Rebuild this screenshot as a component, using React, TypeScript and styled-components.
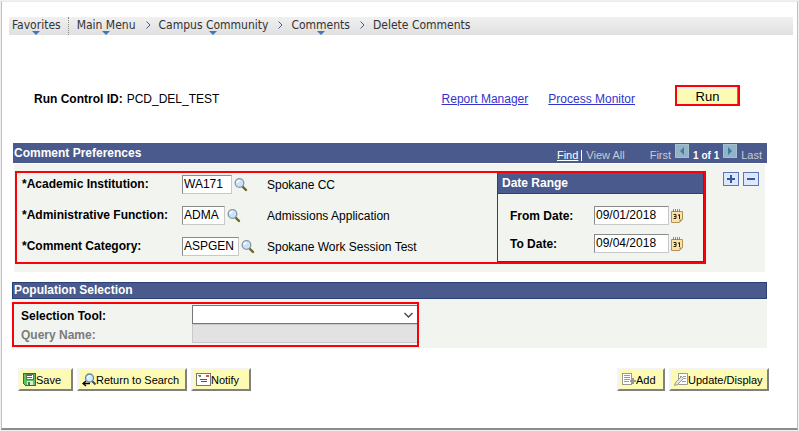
import React from "react";
import styled, { createGlobalStyle } from "styled-components";

const NAVY = "#4a5a8c";
const NAVY_EDGE = "#2b4075";
const PANEL = "#f2f4ef";
const RED = "#fb0007";
const CREAM = "#fdfbb3";

const GlobalStyle = createGlobalStyle`
  * { box-sizing: border-box; }
  body {
    margin: 0;
    background: #f0f0f0;
    color: #000;
    font: 12px/16px "Liberation Sans", Arial, sans-serif;
  }
  button, input, select { font: inherit; color: inherit; border-radius: 0; margin: 0; }
  svg { display: block; flex: none; }
`;

const Page = styled.div`
  margin: 1px;
  min-height: calc(100vh - 2px);
  padding: 15px 4px 36px 7px;
  background: #fff;
  border: 1px solid #c0c0c0;
  border-top-color: #ebebeb;
  border-bottom: 2px solid #8c8c8c;
`;

const Crumbs = styled.nav`
  display: flex;
  align-items: center;
  height: 18px;
  padding-left: 3px;
  background: linear-gradient(#f0f0f0, #e0e0e0);
  font: 12px/18px "DejaVu Sans Condensed", Tahoma, sans-serif;
  color: #333;
`;

const CrumbLink = styled.a`
  position: relative;
  height: 18px;
  line-height: 16px;
  color: inherit;
  text-decoration: none;
  white-space: nowrap;
`;

const CrumbArrow = styled.svg`
  position: absolute;
  bottom: 0;
  left: calc(50% - 4px);
`;

const CrumbDivider = styled.span`
  height: 18px;
  margin: 0 8px 0 7px;
  border-left: 1px dotted #888;
`;

const CrumbChevron = styled.svg`
  margin: 0 8px 2px 10px;
`;

const Content = styled.main`
  padding: 0 26px 0 4px;
`;

const RunRow = styled.div`
  display: flex;
  align-items: center;
  margin: 49px 27px 36px 21px;
`;

const RunId = styled.span`
  flex: 1;
  padding-top: 7px;
`;

const RunLabel = styled.strong`
  margin-right: 4px;
`;

const RunLink = styled.a`
  margin-right: 20px;
  padding-top: 7px;
  color: #3333cc;
`;

const RunButton = styled.button`
  width: 65px;
  height: 21px;
  margin-left: 20px;
  padding: 2px 0 0;
  border: 2px solid ${RED};
  background: ${CREAM};
  box-shadow: inset -1px 0 #808080, inset 0 2px #f4f4ee;
  font-size: 13px;
  line-height: 15px;
`;

const SectionBar = styled.header<{ $outlined?: boolean }>`
  display: flex;
  align-items: center;
  justify-content: space-between;
  min-height: ${(p) => (p.$outlined ? 17 : 20)}px;
  padding: 0 5px 0 1px;
  border: ${(p) => (p.$outlined ? `1px solid ${NAVY_EDGE}` : "0")};
  background: ${NAVY};
  color: #fff;
`;

const SectionTitle = styled.h2`
  margin: 0;
  font-size: 12px;
  line-height: 15px;
`;

const Pager = styled.div`
  display: flex;
  align-items: center;
  font-size: 11px;
  color: #c8ccd6;
`;

const PagerText = styled.span`
  padding-top: 5px;
  line-height: 15px;
`;

const PagerLink = styled.a`
  padding-top: 5px;
  line-height: 15px;
  color: #fff;
`;

const PagerBar = styled.span`
  width: 1px;
  height: 11px;
  margin: 4px 4px 0 3px;
  background: #fff;
`;

const PagerGap = styled.span`
  width: 25px;
`;

const PagerButton = styled.button`
  width: 14px;
  height: 14px;
  margin: 0 4px 4px;
  padding: 2px 4px;
  border: 1px solid #a3c0d0;
  background: #93b3c6;
`;

const PagerCount = styled.strong`
  padding-top: 5px;
  font-size: 10px;
  line-height: 15px;
  color: #fff;
`;

const PreferencesPanel = styled.div`
  display: flex;
  align-items: flex-start;
  margin: 1px 2px 0 1px;
  padding: 7px 6px 8px 1px;
  background: ${PANEL};
`;

const PreferencesBox = styled.div`
  flex: 1;
  display: flex;
  margin-right: 17px;
  border: 2px solid ${RED};
`;

const FieldGrid = styled.div`
  flex: 1;
  display: grid;
  grid-template-columns: 160px 85px 1fr;
  grid-auto-rows: 19px;
  row-gap: 12px;
  padding: 2px 0 5px 5px;
`;

const Label = styled.label<{ $muted?: boolean }>`
  padding-top: 1px;
  font-weight: bold;
  white-space: nowrap;
  color: ${(p) => (p.$muted ? "#7b7b7b" : "#000")};
`;

const FieldSlot = styled.span`
  display: flex;
  align-items: center;
  gap: 2px;
`;

const TextInput = styled.input<{ $width: number }>`
  width: ${(p) => p.$width}px;
  height: 19px;
  padding: 0 1px 2px;
  border: 1px solid #c8c8c8;
  border-top-color: #8b8b8b;
  border-left-color: #8b8b8b;
  background: #fff;
`;

const IconButton = styled.button`
  padding: 0;
  border: 0;
  background: none;
`;

const Description = styled.span`
  padding-top: 2px;
`;

const DateBox = styled.fieldset`
  width: 207px;
  min-width: 0;
  margin: 0;
  padding: 0;
  border: 1px solid ${NAVY_EDGE};
  border-top: 0;
`;

const DateHeader = styled.h3`
  height: 21px;
  margin: 0;
  padding: 0 4px;
  background: ${NAVY};
  border-bottom: 1px solid ${NAVY_EDGE};
  color: #fff;
  font-size: 12px;
  line-height: 20px;
`;

const DateGrid = styled.div`
  display: grid;
  grid-template-columns: 84px 1fr;
  grid-auto-rows: 19px;
  row-gap: 9px;
  padding: 12px 0 8px 12px;
`;

const DateLabel = styled(Label)`
  padding-top: 2px;
`;

const RowButtons = styled.div`
  display: flex;
  gap: 4px;
  padding-top: 1px;
`;

const RowButton = styled.button`
  width: 16px;
  height: 14px;
  padding: 1px 3px;
  border: 1px solid #5b74ba;
  background: #dce8fb;
`;

const Population = styled.section`
  margin: 10px 0 0 -1px;
`;

const PopulationPanel = styled.div`
  padding: 3px 0 1px;
  background: ${PANEL};
`;

const PopulationBox = styled.div`
  display: grid;
  grid-template-columns: 172px 1fr;
  grid-auto-rows: 19px;
  width: 407px;
  max-width: 100%;
  padding: 1px 0 2px 6px;
  border: 2px solid ${RED};
`;

const PopulationLabel = styled(Label)`
  padding: 3px 0 0 1px;
`;

const SelectWrap = styled.span`
  position: relative;
  display: block;
`;

const SelectBox = styled.select`
  display: block;
  width: 100%;
  height: 19px;
  padding: 0 18px 0 3px;
  border: 1px solid #777;
  border-right: 0;
  background: #fff;
  appearance: none;
`;

const SelectChevron = styled.svg`
  position: absolute;
  right: 4px;
  top: 7px;
  pointer-events: none;
`;

const QueryInput = styled.input`
  width: 100%;
  height: 19px;
  border: 1px solid #c8c8c8;
  border-right: 0;
  background: #e2e2e2;
`;

const Toolbar = styled.footer`
  display: flex;
  gap: 4px;
  margin: 20px -2px 0 5px;
`;

const Spacer = styled.span`
  flex: 1;
`;

const ToolButton = styled.button<{ $width: number }>`
  display: flex;
  align-items: center;
  min-width: ${(p) => p.$width}px;
  height: 23px;
  padding: 0 2px 0 3px;
  border: 2px solid #f4f4f4;
  border-right-color: #808080;
  border-bottom-color: #808080;
  background: ${CREAM};
  font-size: 11px;
  white-space: nowrap;
`;

const LookupIcon = () => (
  <svg width="14" height="15" viewBox="0 0 14 15">
    <path d="M8 9l4 4" stroke="#6b6522" strokeWidth="2.4" strokeLinecap="round" />
    <circle cx="5.5" cy="6" r="4.3" fill="#c9e4fa" stroke="#8796a8" strokeWidth="1.3" />
    <path d="M3.2 6a2.4 2.4 0 0 1 2.5-2.5" stroke="#fff" strokeWidth="1.4" fill="none" />
  </svg>
);

const CalendarIcon = () => (
  <svg width="12" height="14" viewBox="0 0 12 14">
    <path d="M.5 2.5h11v8l-3 3h-8z" fill="#fbe3a4" stroke="#b3925a" />
    <path d="M11.5 10.5h-3v3z" fill="#b3925a" />
    <path d="M2.5 0v3M4.5 0v3M6.5 0v3M8.5 0v3" stroke="#8d7348" strokeWidth=".8" />
    <path d="M2.5 5.5h2.500v4H2.500M3 7.500h2M7 6.500l1.500-1v4.500" fill="none" stroke="#2a2418" />
  </svg>
);

const SaveIcon = () => (
  <svg width="13" height="13" viewBox="0 0 13 13" shapeRendering="crispEdges">
    <path d="M.5.500h12v12h-10l-2-2z" fill="#5cc25f" stroke="#555" />
    <path d="M3 1h7v5H3z" fill="#fff" stroke="#5d735d" />
    <path d="M4 2.500h5M4 4.500h5" stroke="#248b30" />
    <path d="M4 8h6v4H4z" fill="#e4e4e4" />
    <path d="M5 9h2v3H5z" fill="#367d3c" />
  </svg>
);

const ReturnIcon = () => (
  <svg width="14" height="14" viewBox="0 0 14 14">
    <path d="M9.500 7.500l4 4" stroke="#444a54" strokeWidth="2" />
    <circle cx="7.500" cy="5" r="4" fill="#d5ecff" stroke="#6783a8" strokeWidth="1.300" />
    <path d="M5.500 5a2 2 0 0 1 2-2" stroke="#fff" fill="none" strokeWidth="1.200" />
    <path d="M8 10.500H1M4 8l-3 2.500L4 13" stroke="#000" strokeWidth="1.300" fill="none" />
  </svg>
);

const NotifyIcon = () => (
  <svg width="15" height="13" viewBox="0 0 15 13" shapeRendering="crispEdges">
    <path d="M.500.500h14v12H.5z" fill="#fff" stroke="#777" />
    <path d="M2 2.500h3M3 3.500h2" stroke="#777" />
    <path d="M10 2h3v2h-3z" fill="#d85050" />
    <path d="M4 6.500h7M5 8.500h6" stroke="#555" />
  </svg>
);

const AddIcon = () => (
  <svg width="14" height="13" viewBox="0 0 14 13" shapeRendering="crispEdges">
    <path d="M.5.500h9v11h-9z" fill="#fff" stroke="#999" />
    <path d="M2 2.500h6M2 4.500h6M2 6.500h6M2 8.500h5" stroke="#999" />
    <path d="M11 5v6M8 8h6" stroke="#999" strokeWidth="2" />
  </svg>
);

const UpdateIcon = () => (
  <svg width="14" height="13" viewBox="0 0 14 13">
    <path d="M4.500.500h9v11h-9z" fill="#fff" stroke="#999" />
    <path d="M6 3.500h2M9 3.500h3M6 5.500h2M9 5.500h3M8 8.500h4" stroke="#999" />
    <path d="M.500 12.500l1-3 6-6 2 2-6 6z" fill="#e4e4e4" stroke="#999" />
  </svg>
);

const Crumb = ({ text, menu = true }: { text: string; menu?: boolean }) => (
  <CrumbLink href="#">
    {text}
    {menu && (
      <CrumbArrow width="8" height="4" viewBox="0 0 8 4">
        <path d="M0 0h8L4 4z" fill="#3d77bd" />
      </CrumbArrow>
    )}
  </CrumbLink>
);

const Separator = () => (
  <CrumbChevron width="5" height="8" viewBox="0 0 5 8">
    <path d="M.500.500L4 4 .500 7.500" fill="none" stroke="#3d5f90" />
  </CrumbChevron>
);

const lookups = [
  { id: "institution", label: "*Academic Institution:", value: "WA171", width: 50, text: "Spokane CC" },
  { id: "function", label: "*Administrative Function:", value: "ADMA", width: 43, text: "Admissions Application" },
  { id: "category", label: "*Comment Category:", value: "ASPGEN", width: 57, text: "Spokane Work Session Test" },
];

const dates = [
  { id: "from", label: "From Date:", value: "09/01/2018" },
  { id: "to", label: "To Date:", value: "09/04/2018" },
];

export default function App() {
  return (
    <>
      <GlobalStyle />
      <Page>
        <Crumbs aria-label="Breadcrumb">
          <Crumb text="Favorites" />
          <CrumbDivider />
          <Crumb text="Main Menu" />
          <Separator />
          <Crumb text="Campus Community" />
          <Separator />
          <Crumb text="Comments" />
          <Separator />
          <Crumb text="Delete Comments" menu={false} />
        </Crumbs>
        <Content>
          <RunRow>
            <RunId>
              <RunLabel>Run Control ID:</RunLabel>
              PCD_DEL_TEST
            </RunId>
            <RunLink href="#">Report Manager</RunLink>
            <RunLink href="#">Process Monitor</RunLink>
            <RunButton type="button">Run</RunButton>
          </RunRow>

          <section>
            <SectionBar>
              <SectionTitle>Comment Preferences</SectionTitle>
              <Pager>
                <PagerLink href="#">Find</PagerLink>
                <PagerBar />
                <PagerText>View All</PagerText>
                <PagerGap />
                <PagerText>First</PagerText>
                <PagerButton type="button" aria-label="Previous row">
                  <svg width="4" height="8" viewBox="0 0 4 8">
                    <path d="M4 0v8L0 4z" fill="#4a7a9b" />
                  </svg>
                </PagerButton>
                <PagerCount>1 of 1</PagerCount>
                <PagerButton type="button" aria-label="Next row">
                  <svg width="4" height="8" viewBox="0 0 4 8">
                    <path d="M0 0v8l4-4z" fill="#3d78ad" />
                  </svg>
                </PagerButton>
                <PagerText>Last</PagerText>
              </Pager>
            </SectionBar>
            <PreferencesPanel>
              <PreferencesBox>
                <FieldGrid>
                  {lookups.map((f) => (
                    <React.Fragment key={f.id}>
                      <Label htmlFor={f.id}>{f.label}</Label>
                      <FieldSlot>
                        <TextInput id={f.id} $width={f.width} defaultValue={f.value} />
                        <IconButton type="button" aria-label="Look up">
                          <LookupIcon />
                        </IconButton>
                      </FieldSlot>
                      <Description>{f.text}</Description>
                    </React.Fragment>
                  ))}
                </FieldGrid>
                <DateBox aria-label="Date Range">
                  <DateHeader>Date Range</DateHeader>
                  <DateGrid>
                    {dates.map((d) => (
                      <React.Fragment key={d.id}>
                        <DateLabel htmlFor={d.id}>{d.label}</DateLabel>
                        <FieldSlot>
                          <TextInput id={d.id} $width={75} defaultValue={d.value} />
                          <IconButton type="button" aria-label="Choose a date">
                            <CalendarIcon />
                          </IconButton>
                        </FieldSlot>
                      </React.Fragment>
                    ))}
                  </DateGrid>
                </DateBox>
              </PreferencesBox>
              <RowButtons>
                <RowButton type="button" aria-label="Add row">
                  <svg width="8" height="10" viewBox="0 0 8 10">
                    <path d="M0 5h8M4 1v8" stroke="#3a56a0" strokeWidth="2" />
                  </svg>
                </RowButton>
                <RowButton type="button" aria-label="Delete row">
                  <svg width="8" height="10" viewBox="0 0 8 10">
                    <path d="M0 5h8" stroke="#3a56a0" strokeWidth="2" />
                  </svg>
                </RowButton>
              </RowButtons>
            </PreferencesPanel>
          </section>

          <Population>
            <SectionBar $outlined>
              <SectionTitle>Population Selection</SectionTitle>
            </SectionBar>
            <PopulationPanel>
              <PopulationBox>
                <PopulationLabel htmlFor="tool">Selection Tool:</PopulationLabel>
                <SelectWrap>
                  <SelectBox id="tool" defaultValue="">
                    <option value="" />
                  </SelectBox>
                  <SelectChevron width="9" height="6" viewBox="0 0 9 6">
                    <path d="M.500 1l4 4 4-4" fill="none" stroke="#444" strokeWidth="1.3" />
                  </SelectChevron>
                </SelectWrap>
                <PopulationLabel $muted htmlFor="query">Query Name:</PopulationLabel>
                <QueryInput id="query" disabled />
              </PopulationBox>
            </PopulationPanel>
          </Population>

          <Toolbar>
            <ToolButton type="button" $width={55}><SaveIcon />Save</ToolButton>
            <ToolButton type="button" $width={110}><ReturnIcon />Return to Search</ToolButton>
            <ToolButton type="button" $width={60}><NotifyIcon />Notify</ToolButton>
            <Spacer />
            <ToolButton type="button" $width={48}><AddIcon />Add</ToolButton>
            <ToolButton type="button" $width={100}><UpdateIcon />Update/Display</ToolButton>
          </Toolbar>
        </Content>
      </Page>
    </>
  );
}
